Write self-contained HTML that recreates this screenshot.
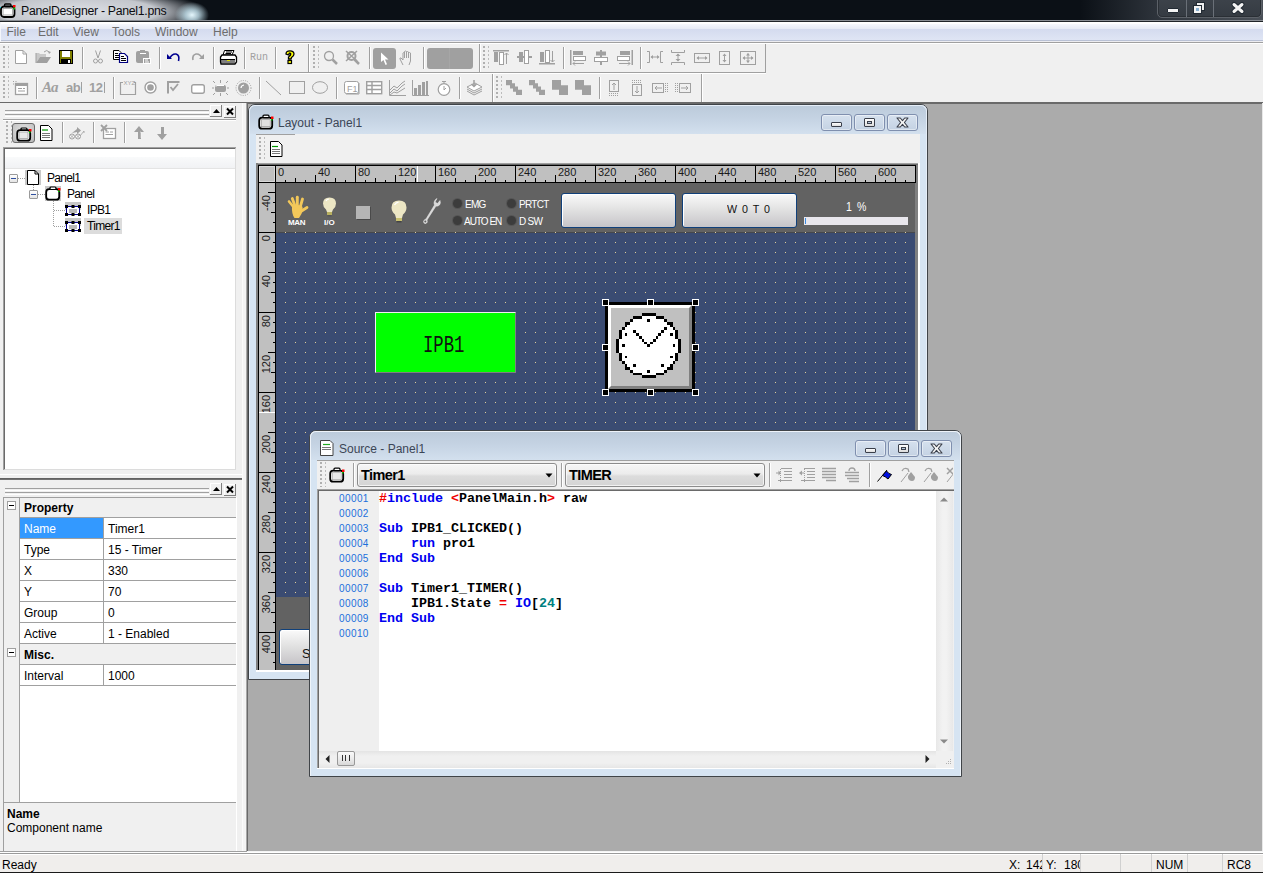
<!DOCTYPE html>
<html><head><meta charset="utf-8">
<style>
*{margin:0;padding:0;box-sizing:border-box}
html,body{width:1263px;height:873px;overflow:hidden;background:#f0f0f0;font-family:"Liberation Sans",sans-serif;font-size:12px;color:#000;position:relative}
.a{position:absolute}
svg{position:absolute;overflow:visible}
#title{left:0;top:0;width:1263px;height:22px;background:#0b1016;overflow:hidden}
.mi{position:absolute;font-size:12px;color:#6d6d6d;margin-top:1px}
.sep{position:absolute;width:1px;background:#a0a0a0;border-right:1px solid #fff;width:2px}
.grip{position:absolute;width:7px;background:linear-gradient(transparent 2px,#f0f0f0 2px) 0 0/7px 4px,linear-gradient(90deg,#b0b0b0 0 2px,transparent 2px 5px,#bcbcbc 5px 6px,transparent 6px) 0 0/7px 4px}
.tbar{position:absolute;border-bottom:1px solid #a0a0a0;border-right:1px solid #a0a0a0;box-shadow:inset 1px 1px 0 #fff}
.pg{font-size:12px;white-space:nowrap}
.rl{font-size:11px;line-height:12px;color:#1a1a1a;white-space:nowrap}
.rv{transform-origin:0 0;transform:rotate(-90deg) translateX(-100%)}
.ln{font-size:10px;line-height:15px;color:#1a70dc;white-space:nowrap;letter-spacing:.4px}
.code{font-family:"Liberation Mono",monospace;font-weight:bold;font-size:13.33px;line-height:15px;color:#000;white-space:pre}
.k{color:#0000f0}.r{color:#f00000}.t{color:#008080}
</style></head><body>

<!-- ============ TITLE BAR ============ -->
<div id="title" class="a">
  <div class="a" style="left:-40px;top:-10px;width:260px;height:40px;background:radial-gradient(ellipse 128px 24px at 118px 22px,rgba(222,225,230,1) 0,rgba(205,208,214,.95) 62%,rgba(11,16,22,0) 100%)"></div>
  <div class="a" style="left:162px;top:-6px;width:60px;height:34px;background:radial-gradient(ellipse 17px 13px at 30px 21px,rgba(228,246,252,1) 0,rgba(190,220,232,.8) 40%,rgba(11,16,22,0) 100%)"></div>
  <div class="a" style="left:1080px;top:0;width:183px;height:20px;background:linear-gradient(90deg,rgba(60,66,74,0),rgba(52,58,66,.9) 45%,#3c424a 70%,#4a5058)"></div>
  <div class="a" style="left:0;top:20px;width:1263px;height:1px;background:#8a8e94"></div>
  <div class="a" style="left:0;top:21px;width:1263px;height:1px;background:#202428"></div>
</div>

<!-- title text/icon -->
<svg style="left:0;top:3px" width="17" height="15" viewBox="0 0 17 15"><rect x="1" y="3.5" width="13.5" height="10.5" rx="3" fill="#fff" stroke="#000" stroke-width="1.8"/><rect x="4.5" y="1" width="6.5" height="2.5" rx="1" fill="none" stroke="#000" stroke-width="1.3"/><rect x="3" y="5.5" width="9.5" height="6.5" fill="#fff" stroke="#999" stroke-width=".8"/><rect x="13" y="2" width="2.5" height="2.5" fill="#f00"/><rect x="13.5" y="4.5" width="1.5" height="2" fill="#0c0"/><rect x="0" y="4" width="1" height="1" fill="#0cc"/></svg>
<div class="a" style="left:21px;top:4px;font-size:12.3px;letter-spacing:-0.3px;color:#0c0c10;white-space:nowrap">PanelDesigner - Panel1.pns</div>
<!-- caption buttons -->
<div class="a" style="left:1157px;top:-3px;width:105px;height:21px;border:1px solid #5c6168;border-radius:0 0 5px 5px;background:linear-gradient(#3d434b,#353b42);box-shadow:inset 0 0 0 1px #2a2f35"></div>
<div class="a" style="left:1186px;top:0;width:1px;height:17px;background:#6a7078"></div>
<div class="a" style="left:1213px;top:0;width:1px;height:17px;background:#6a7078"></div>
<div class="a" style="left:1167px;top:8px;width:12px;height:5px;background:#f4f4f4;border:1px solid #222a33;border-radius:1px"></div>
<svg style="left:1192px;top:1px" width="14" height="14" viewBox="0 0 14 14">
 <rect x="4.5" y="1.5" width="8" height="8" fill="#eee" stroke="#222a33"/>
 <rect x="1.5" y="4.5" width="8" height="8" fill="#f4f4f4" stroke="#222a33"/>
 <rect x="4" y="7" width="3" height="3" fill="#8ab0d0"/>
</svg>
<svg style="left:1231px;top:2px" width="14" height="12" viewBox="0 0 14 12">
 <path d="M3 2.5 L11 9.5 M11 2.5 L3 9.5" stroke="#222a33" stroke-width="5" stroke-linecap="round"/>
 <path d="M3 2.5 L11 9.5 M11 2.5 L3 9.5" stroke="#f4f4f4" stroke-width="3" stroke-linecap="round"/>
</svg>

<!-- ============ MENU BAR ============ -->
<div class="a" style="left:0;top:22px;width:1263px;height:20px;background:linear-gradient(#fff 0,#fff 1.5px,#f4f6fc 2.5px,#e6eaf5 7px,#d4dbef 7px,#dfe5f4 18px,#b9c1d5 18px,#b9c1d5 19px,#ededf1 19px)"></div>
<div class="a" style="left:0;top:22px;width:1px;height:20px;background:#f4f6fb"></div>
<span class="mi" style="left:6.5px;top:24px">File</span>
<span class="mi" style="left:38px;top:24px">Edit</span>
<span class="mi" style="left:73px;top:24px">View</span>
<span class="mi" style="left:112px;top:24px">Tools</span>
<span class="mi" style="left:155px;top:24px">Window</span>
<span class="mi" style="left:213px;top:24px">Help</span>

<div class="a" style="left:0;top:42px;width:1263px;height:1px;background:#a0a0a0"></div>
<div class="a" style="left:0;top:43px;width:1263px;height:1px;background:#fff"></div>

<!-- ============ TOOLBARS ============ -->
<div class="a" style="left:0;top:72px;width:766px;height:1px;background:#a0a0a0"></div>
<div class="a" style="left:0;top:73px;width:766px;height:1px;background:#fff"></div>
<div class="a" style="left:0;top:102px;width:1263px;height:1px;background:#6a6a6a"></div>
<!-- toolbar right borders -->
<div class="a" style="left:308px;top:44px;width:1px;height:28px;background:#a0a0a0"></div>
<div class="a" style="left:309px;top:44px;width:1px;height:28px;background:#fff"></div>
<div class="a" style="left:479px;top:44px;width:1px;height:28px;background:#a0a0a0"></div>
<div class="a" style="left:480px;top:44px;width:1px;height:28px;background:#fff"></div>
<div class="a" style="left:765px;top:44px;width:1px;height:29px;background:#a0a0a0"></div>
<div class="a" style="left:492px;top:74px;width:1px;height:28px;background:#a0a0a0"></div>
<div class="a" style="left:493px;top:74px;width:1px;height:28px;background:#fff"></div>
<div class="a" style="left:701px;top:74px;width:1px;height:28px;background:#a0a0a0"></div>
<div class="a" style="left:702px;top:74px;width:1px;height:28px;background:#fff"></div>

<!-- toolbar 1 icons -->
<div class="grip" style="left:3px;top:46px;height:24px"></div>
<svg style="left:15px;top:50px" width="12" height="14" viewBox="0 0 12 14"><path d="M0.5 0.5H8L11.5 4V13.5H0.5Z" fill="#fff" stroke="#a0a0a0"/><path d="M8 0.5V4H11.5" fill="none" stroke="#a0a0a0"/></svg>
<svg style="left:36px;top:50px" width="16" height="14" viewBox="0 0 16 14"><path d="M0 3H3L4 4H10V7H4L0 13Z" fill="#c8c8c8"/><path d="M0 13L4 7H15L11 13Z" fill="#a0a0a0"/><path d="M0 3V13" stroke="#a0a0a0"/><path d="M8 2Q11 -1 13 2" fill="none" stroke="#a0a0a0"/><path d="M12 1L15 2L13 4Z" fill="#a0a0a0"/></svg>
<svg style="left:59px;top:50px" width="15" height="15" viewBox="0 0 15 15"><rect x="0" y="0" width="14" height="14" fill="#000"/><rect x="1" y="1" width="12" height="12" fill="#808000"/><rect x="3" y="1" width="8" height="6" fill="#fff"/><rect x="2" y="9" width="10" height="5" fill="#000"/><rect x="9" y="10" width="2" height="3" fill="#fff"/></svg>
<div class="sep" style="left:82px;top:47px;height:22px"></div>
<svg style="left:93px;top:50px" width="10" height="14" viewBox="0 0 10 14"><path d="M2.5 0.5L5 8M7.5 0.5L5 8" stroke="#a0a0a0" fill="none"/><circle cx="2.5" cy="11" r="2" fill="none" stroke="#a0a0a0"/><circle cx="7.5" cy="11" r="2" fill="none" stroke="#a0a0a0"/></svg>
<svg style="left:113px;top:50px" width="16" height="14" viewBox="0 0 16 14"><path d="M0.5 0.5H6L8 2.5V9.5H0.5Z" fill="#fff" stroke="#000"/><path d="M2 3.5H5M2 5.5H6M2 7.5H6" stroke="#000"/><path d="M6.5 3.5H11.5L14.5 6.5V12.5H6.5Z" fill="#fff" stroke="#000080" stroke-width="1.2"/><path d="M8 6.5H11M8 8.5H13M8 10.5H13" stroke="#000"/></svg>
<svg style="left:136px;top:50px" width="16" height="14" viewBox="0 0 16 14"><rect x="0" y="1" width="13" height="12" rx="2" fill="#a0a0a0"/><rect x="4" y="0" width="5" height="2" fill="#a0a0a0"/><rect x="4" y="3" width="6" height="1" fill="#fff"/><rect x="7" y="8" width="8" height="6" fill="#fff"/><rect x="8" y="9" width="6" height="4" fill="#a0a0a0"/><path d="M9 10H12M9 12H13" stroke="#fff"/></svg>
<div class="sep" style="left:159px;top:47px;height:22px"></div>
<svg style="left:167px;top:53px" width="14" height="9" viewBox="0 0 14 9"><path d="M3 5Q5 0.5 9 1Q13 2 11.5 8" fill="none" stroke="#000090" stroke-width="1.6"/><path d="M0 1V6H5Z" fill="#000090"/></svg>
<svg style="left:191px;top:53px" width="14" height="9" viewBox="0 0 14 9"><path d="M11 5Q9 0.5 5 1Q1 2 2 7" fill="none" stroke="#a0a0a0" stroke-width="1.6"/><path d="M13 1V6H8Z" fill="#a0a0a0"/></svg>
<div class="sep" style="left:213px;top:47px;height:22px"></div>
<svg style="left:220px;top:50px" width="17" height="15" viewBox="0 0 17 15"><path d="M4.5 0.5H14L12 5H3Z" fill="#fff" stroke="#000"/><path d="M6 2H12M5.5 3.5H11" stroke="#000"/><path d="M2 5H15L16.5 7V12L15 14H1L0.5 12V7Z" fill="#fff" stroke="#000" stroke-width="1.3"/><rect x="1" y="9" width="14" height="1.5" fill="#000"/><rect x="7" y="10" width="3" height="1" fill="#e0e000"/><path d="M1 12H15" stroke="#000"/></svg>
<div class="sep" style="left:244px;top:47px;height:22px"></div>
<div class="a" style="left:250px;top:52px;font-size:10px;color:#a0a0a0;font-family:'Liberation Mono',monospace;letter-spacing:0px">Run</div>
<div class="sep" style="left:275px;top:47px;height:22px"></div>
<svg style="left:284px;top:50px" width="12" height="14" viewBox="0 0 12 14"><path d="M2 4Q2 0.8 6 0.8Q10 0.8 10 4Q10 6 7.5 7.5L7 9H4.5L4.5 7Q7 5.5 6.8 4Q6.5 3 5.5 3.2Q4.8 3.5 5 5Z" fill="#ffff00" stroke="#000" stroke-width="1.3"/><rect x="4" y="10.5" width="3.5" height="3" fill="#ffff00" stroke="#000" stroke-width="1.2"/></svg>

<!-- toolbar 2 (zoom) -->
<div class="grip" style="left:313px;top:46px;height:24px"></div>
<svg style="left:323px;top:50px" width="16" height="16" viewBox="0 0 16 16"><circle cx="6" cy="6" r="4.5" fill="#f0f0f0" stroke="#a0a0a0" stroke-width="1.3"/><path d="M9.5 9.5L14 14" stroke="#a0a0a0" stroke-width="2.5"/></svg>
<svg style="left:345px;top:50px" width="17" height="16" viewBox="0 0 17 16"><circle cx="6.5" cy="6" r="4" fill="#f0f0f0" stroke="#a0a0a0" stroke-width="2"/><path d="M9.5 9.5L14 14" stroke="#a0a0a0" stroke-width="2.5"/><path d="M1 1L12 11M12 1L1 11" stroke="#a0a0a0" stroke-width="1.5"/></svg>
<div class="sep" style="left:369px;top:47px;height:22px"></div>
<div class="a" style="left:373px;top:48px;width:23px;height:21px;background:#a0a0a0;border-radius:3px"></div>
<svg style="left:380px;top:52px" width="10" height="14" viewBox="0 0 10 14"><path d="M1 0.5V10L3.5 8L5.5 13L7 12.3L5 7.5H8.5Z" fill="#fff"/></svg>
<svg style="left:399px;top:50px" width="16" height="16" viewBox="0 0 16 16"><path d="M4 15L1 9Q0.5 7.5 2 8L4 10V3Q4.5 2 5.5 3V8M5.5 3V1.5Q6.5 0.5 7.5 1.5V8M7.5 2Q8.5 1 9.5 2V8M9.5 3Q10.5 2 11.5 3V11L10 15" fill="none" stroke="#a0a0a0"/></svg>
<div class="sep" style="left:423px;top:47px;height:22px"></div>
<div class="a" style="left:427px;top:48px;width:46px;height:21px;background:#a0a0a0;border-radius:3px"></div>
<div class="a" style="left:449px;top:48px;width:1px;height:21px;background:#a6a6a6"></div>

<!-- toolbar 3 (align) -->
<div class="grip" style="left:483px;top:46px;height:24px"></div>
<svg style="left:493px;top:50px" width="16" height="15" viewBox="0 0 16 15"><rect x="0" y="0" width="16" height="1.5" fill="#a0a0a0"/><rect x="1" y="2" width="4" height="10" fill="#a0a0a0"/><rect x="6.5" y="2.5" width="4" height="12" fill="#fff" stroke="#a0a0a0"/><path d="M13.5 14V3M11.5 5L13.5 3L15.5 5" fill="none" stroke="#a0a0a0"/></svg>
<svg style="left:517px;top:50px" width="15" height="15" viewBox="0 0 15 15"><rect x="0" y="6" width="15" height="2" fill="#a0a0a0"/><rect x="2" y="2" width="4" height="10" fill="#a0a0a0"/><rect x="7.5" y="0.5" width="4" height="13" fill="#fff" stroke="#a0a0a0"/></svg>
<svg style="left:539px;top:50px" width="17" height="15" viewBox="0 0 17 15"><rect x="0" y="13" width="16" height="1.5" fill="#a0a0a0"/><rect x="1" y="2" width="4" height="10" fill="#a0a0a0"/><rect x="6.5" y="0.5" width="4" height="12" fill="#fff" stroke="#a0a0a0"/><path d="M13.5 1V12M11.5 10L13.5 12L15.5 10" fill="none" stroke="#a0a0a0"/></svg>
<div class="sep" style="left:563px;top:47px;height:22px"></div>
<svg style="left:570px;top:50px" width="16" height="15" viewBox="0 0 16 15"><rect x="0" y="0" width="1.5" height="15" fill="#a0a0a0"/><rect x="3" y="1" width="10" height="4" fill="#a0a0a0"/><rect x="3.5" y="6.5" width="12" height="4" fill="#fff" stroke="#a0a0a0"/><path d="M3 13.5H14M5 11.5L3 13.5L5 15.5" fill="none" stroke="#a0a0a0"/></svg>
<svg style="left:594px;top:50px" width="14" height="15" viewBox="0 0 14 15"><rect x="6" y="0" width="2" height="15" fill="#a0a0a0"/><rect x="2" y="1.5" width="10" height="4" fill="#a0a0a0"/><rect x="0.5" y="7.5" width="13" height="4" fill="#fff" stroke="#a0a0a0"/></svg>
<svg style="left:617px;top:50px" width="16" height="15" viewBox="0 0 16 15"><rect x="14.5" y="0" width="1.5" height="15" fill="#a0a0a0"/><rect x="3" y="1" width="10" height="4" fill="#a0a0a0"/><rect x="0.5" y="6.5" width="12" height="4" fill="#fff" stroke="#a0a0a0"/><path d="M2 13.5H13M11 11.5L13 13.5L11 15.5" fill="none" stroke="#a0a0a0"/></svg>
<div class="sep" style="left:640px;top:47px;height:22px"></div>
<svg style="left:647px;top:51px" width="16" height="12" viewBox="0 0 16 12"><path d="M0 0.5H2.5V11.5H0M16 0.5H13.5V11.5H16M4 6H12" fill="none" stroke="#a0a0a0"/><path d="M3.5 6L6 4V8ZM12.5 6L10 4V8Z" fill="#a0a0a0"/></svg>
<svg style="left:671px;top:50px" width="14" height="15" viewBox="0 0 14 15"><path d="M0.5 0V2.5H13.5V0M0.5 15V12.5H13.5V15M7 4V11" fill="none" stroke="#a0a0a0"/><path d="M7 3.5L4.5 6H9.5ZM7 11.5L4.5 9H9.5Z" fill="#a0a0a0"/></svg>
<svg style="left:694px;top:53px" width="16" height="10" viewBox="0 0 16 10"><rect x="0.5" y="0.5" width="15" height="9" fill="none" stroke="#a0a0a0"/><path d="M3 5H13" stroke="#a0a0a0"/><path d="M2.5 5L5 3V7ZM13.5 5L11 3V7Z" fill="#a0a0a0"/></svg>
<svg style="left:719px;top:51px" width="11" height="14" viewBox="0 0 11 14"><rect x="0.5" y="0.5" width="10" height="13" fill="none" stroke="#a0a0a0"/><path d="M5.5 3V11" stroke="#a0a0a0"/><path d="M5.5 2.5L3.5 5H7.5ZM5.5 11.5L3.5 9H7.5Z" fill="#a0a0a0"/></svg>
<svg style="left:740px;top:51px" width="16" height="14" viewBox="0 0 16 14"><rect x="0.5" y="0.5" width="15" height="13" fill="none" stroke="#a0a0a0"/><path d="M3 7H13M8 2.5V11.5" stroke="#a0a0a0"/><path d="M2.5 7L5 5V9ZM13.5 7L11 5V9ZM8 2L6 4.5H10ZM8 12L6 9.5H10Z" fill="#a0a0a0"/></svg>

<!-- row 2 toolbar 1 -->
<div class="grip" style="left:3px;top:76px;height:24px"></div>
<svg style="left:12px;top:80px" width="17" height="16" viewBox="0 0 17 16"><path d="M1 1L2 2M3 3L4 4M1 4H2M4 1V2" stroke="#a0a0a0"/><rect x="3.5" y="3.5" width="12" height="11" fill="#fff" stroke="#a0a0a0" stroke-width="1.3"/><rect x="4" y="4" width="11" height="2" fill="#a0a0a0"/><path d="M6 8.5H10M11 8.5H13M6 11H13" stroke="#a0a0a0" stroke-width="1.2"/></svg>
<div class="sep" style="left:36px;top:77px;height:22px"></div>
<div class="a" style="left:42px;top:79px;font-family:'Liberation Serif',serif;font-style:italic;font-weight:bold;font-size:15px;color:#a0a0a0;letter-spacing:-1px">Aa</div>
<div class="a" style="left:66px;top:80px;font-weight:bold;font-size:13px;color:#a0a0a0;letter-spacing:-0.5px">ab</div>
<div class="a" style="left:81px;top:82px;width:1px;height:11px;background:#a0a0a0"></div>
<div class="a" style="left:89px;top:80px;font-weight:bold;font-size:13px;color:#a0a0a0;letter-spacing:-0.5px">12</div>
<div class="a" style="left:104px;top:82px;width:1px;height:11px;background:#a0a0a0"></div>
<div class="sep" style="left:113px;top:77px;height:22px"></div>
<svg style="left:120px;top:80px" width="17" height="16" viewBox="0 0 17 16"><path d="M3 2.5H0.5V14.5H15.5V2.5H14" fill="none" stroke="#a0a0a0" stroke-width="1.2"/><text x="3.5" y="5" font-size="6" fill="#a0a0a0" font-family="Liberation Sans">XYZ</text></svg>
<svg style="left:144px;top:81px" width="13" height="13" viewBox="0 0 13 13"><circle cx="6.5" cy="6.5" r="5.5" fill="#fff" stroke="#a0a0a0" stroke-width="1.4"/><circle cx="6.5" cy="6.5" r="3.3" fill="#a0a0a0"/></svg>
<svg style="left:167px;top:81px" width="13" height="13" viewBox="0 0 13 13"><path d="M1 12.5V1H12.5" fill="none" stroke="#a0a0a0" stroke-width="2"/><path d="M3.5 6L6 9L11 3" fill="none" stroke="#a0a0a0" stroke-width="1.8"/></svg>
<svg style="left:191px;top:84px" width="14" height="10" viewBox="0 0 14 10"><rect x="0.7" y="0.7" width="12.6" height="8.6" rx="2" fill="#fff" stroke="#a0a0a0" stroke-width="1.4"/></svg>
<svg style="left:212px;top:80px" width="17" height="16" viewBox="0 0 17 16"><rect x="3" y="5" width="11" height="7" rx="2" fill="#a0a0a0"/><path d="M4 6.5Q4 5.5 5 5.5H12" stroke="#fff" fill="none"/><path d="M8.5 0V3M8.5 13V16M0 8H2M15 8H17M1 1L3 3M16 1L14 3M1 15L3 13M16 15L14 13" stroke="#a0a0a0"/></svg>
<svg style="left:235px;top:80px" width="17" height="16" viewBox="0 0 17 16"><circle cx="8.5" cy="8" r="5.5" fill="#a0a0a0"/><path d="M6 8Q6 5.5 9 5" stroke="#fff" fill="none" stroke-width="1.2"/><circle cx="8.5" cy="8" r="7.5" fill="none" stroke="#a0a0a0" stroke-dasharray="1 1.3"/></svg>
<div class="sep" style="left:259px;top:77px;height:22px"></div>
<svg style="left:265px;top:80px" width="17" height="16" viewBox="0 0 17 16"><path d="M1 1L16 15" stroke="#a0a0a0"/></svg>
<svg style="left:289px;top:81px" width="17" height="14" viewBox="0 0 17 14"><rect x="0.5" y="0.5" width="15" height="12" fill="none" stroke="#a0a0a0"/></svg>
<svg style="left:312px;top:81px" width="17" height="14" viewBox="0 0 17 14"><ellipse cx="8" cy="6.5" rx="7.5" ry="5.8" fill="none" stroke="#a0a0a0"/></svg>
<div class="sep" style="left:336px;top:77px;height:22px"></div>
<svg style="left:344px;top:81px" width="16" height="14" viewBox="0 0 16 14"><rect x="0.5" y="0.5" width="14" height="12" rx="2" fill="#fff" stroke="#a0a0a0"/><path d="M2 13H15V2" stroke="#a0a0a0" fill="none"/><text x="3" y="10.5" font-size="9" fill="#a0a0a0" font-family="Liberation Sans">F1</text></svg>
<svg style="left:366px;top:81px" width="17" height="14" viewBox="0 0 17 14"><rect x="0.7" y="0.7" width="15" height="12" fill="#fff" stroke="#a0a0a0" stroke-width="1.4"/><path d="M1 4.5H16M1 8.5H16M6 1V13" stroke="#a0a0a0" stroke-width="1.4"/></svg>
<svg style="left:389px;top:80px" width="17" height="16" viewBox="0 0 17 16"><path d="M0.5 0V15.5H17" fill="none" stroke="#a0a0a0"/><path d="M1 10L5 6L8 8L13 3L16 1M1 13L5 9L8 11L13 6L16 4M1 15L5 12L8 13L16 8" fill="none" stroke="#a0a0a0"/></svg>
<svg style="left:412px;top:80px" width="17" height="16" viewBox="0 0 17 16"><path d="M0.5 0V15.5H17" fill="none" stroke="#a0a0a0"/><rect x="2" y="8" width="3" height="7" fill="#a0a0a0"/><rect x="6" y="5" width="3" height="10" fill="#a0a0a0"/><rect x="10" y="2" width="3" height="13" fill="#a0a0a0"/><rect x="14" y="1" width="2" height="14" fill="#a0a0a0"/></svg>
<svg style="left:436px;top:80px" width="16" height="16" viewBox="0 0 16 16"><circle cx="8" cy="9.5" r="5.8" fill="#fff" stroke="#a0a0a0" stroke-width="1.2"/><path d="M6 1.5H10M8 2V3.5M8 6V10L10 8" fill="none" stroke="#a0a0a0"/></svg>
<div class="sep" style="left:459px;top:77px;height:22px"></div>
<svg style="left:466px;top:80px" width="17" height="16" viewBox="0 0 17 16"><path d="M1 9L8 13L16 9M1 11L8 15L16 11" fill="none" stroke="#a0a0a0"/><path d="M1 7L8 11L16 7L9 3Z" fill="#fff" stroke="#a0a0a0"/><path d="M8 0V6M5.5 4L8 6.5L10.5 4" fill="none" stroke="#a0a0a0" stroke-width="1.5"/></svg>

<!-- row 2 toolbar 2 -->
<div class="grip" style="left:496px;top:76px;height:24px"></div>
<svg style="left:506px;top:80px" width="17" height="15" viewBox="0 0 17 14" preserveAspectRatio="none"><path d="M0 0H6V3H9V6H12V9H16V14H10V11H7V8H4V5H0Z" fill="#a0a0a0"/></svg>
<svg style="left:529px;top:80px" width="17" height="15" viewBox="0 0 17 14" preserveAspectRatio="none"><path d="M0 0H6V3H9V6H12V9H16V14H10V11H7V8H4V5H0Z" fill="#a0a0a0"/></svg>
<svg style="left:552px;top:80px" width="17" height="15" viewBox="0 0 17 14" preserveAspectRatio="none"><path d="M0 0H9V5H16V14H7V9H0Z" fill="#a0a0a0"/></svg>
<svg style="left:575px;top:80px" width="17" height="15" viewBox="0 0 17 14" preserveAspectRatio="none"><path d="M0 0H9V5H16V14H7V9H0Z" fill="#a0a0a0"/></svg>
<div class="sep" style="left:599px;top:77px;height:22px"></div>
<svg style="left:609px;top:80px" width="10" height="16" viewBox="0 0 10 16"><rect x="0.5" y="0.5" width="9" height="11" fill="none" stroke="#a0a0a0"/><path d="M5 3V10M3 5L5 3L7 5" fill="none" stroke="#a0a0a0"/><path d="M0 13.5H10M0 15.5H10" stroke="#a0a0a0" stroke-dasharray="1 1"/></svg>
<svg style="left:632px;top:80px" width="10" height="16" viewBox="0 0 10 16"><path d="M0 0.5H10M0 2.5H10" stroke="#a0a0a0" stroke-dasharray="1 1"/><rect x="0.5" y="4.5" width="9" height="11" fill="none" stroke="#a0a0a0"/><path d="M5 6V13M3 11L5 13L7 11" fill="none" stroke="#a0a0a0"/></svg>
<svg style="left:652px;top:83px" width="16" height="10" viewBox="0 0 16 10"><rect x="0.5" y="0.5" width="11" height="9" fill="none" stroke="#a0a0a0"/><path d="M3 5H10M5 3L3 5L5 7" fill="none" stroke="#a0a0a0"/><path d="M13.5 0V10M15.5 0V10" stroke="#a0a0a0" stroke-dasharray="1 1"/></svg>
<svg style="left:675px;top:83px" width="16" height="10" viewBox="0 0 16 10"><path d="M0.5 0V10M2.5 0V10" stroke="#a0a0a0" stroke-dasharray="1 1"/><rect x="4.5" y="0.5" width="11" height="9" fill="none" stroke="#a0a0a0"/><path d="M6 5H13M11 3L13 5L11 7" fill="none" stroke="#a0a0a0"/></svg>

<!-- ============ LEFT DOCK ============ -->
<div class="a" style="left:236px;top:497px;width:1px;height:354px;background:#fff"></div>
<div class="a" style="left:235px;top:497px;width:1px;height:354px;background:#e2e2e2"></div>
<div class="a" style="left:242px;top:103px;width:1px;height:748px;background:#fbfbfb"></div>
<div class="a" style="left:243px;top:103px;width:3px;height:748px;background:#f4f4f4"></div>
<div class="a" style="left:246px;top:103px;width:1px;height:748px;background:#a8a8a8"></div>
<div class="a" style="left:247px;top:103px;width:1px;height:748px;background:#6a6a6a"></div>
<!-- dock 1 title -->
<div class="a" style="left:5px;top:110px;width:204px;height:3px;border-top:1px solid #a0a0a0;border-bottom:1px solid #fff"></div>
<div class="a" style="left:5px;top:114px;width:204px;height:3px;border-top:1px solid #a0a0a0;border-bottom:1px solid #fff"></div>
<div class="a" style="left:210px;top:105px;width:12px;height:12px;background:#f0f0f0;border-right:1px solid #808080;border-bottom:1px solid #808080;box-shadow:inset 1px 1px 0 #fff"></div>
<svg style="left:213px;top:109px" width="7" height="4" viewBox="0 0 7 4"><path d="M0 4L3.5 0L7 4Z" fill="#000"/></svg>
<div class="a" style="left:224px;top:106px;width:12px;height:12px;background:#f0f0f0;border-right:1px solid #808080;border-bottom:1px solid #808080;box-shadow:inset 1px 1px 0 #fff"></div>
<svg style="left:226px;top:108px" width="8" height="7" viewBox="0 0 8 7"><path d="M1 0.5L7 6.5M7 0.5L1 6.5" stroke="#000" stroke-width="2"/></svg>
<div class="a" style="left:3px;top:119px;width:233px;height:1px;background:#a0a0a0"></div>
<div class="a" style="left:3px;top:120px;width:233px;height:1px;background:#fff"></div>
<!-- dock 1 toolbar -->
<div class="grip" style="left:6px;top:121px;height:24px"></div>
<div class="a" style="left:12px;top:123px;width:23px;height:20px;border:1px solid #6a6a6a;border-radius:3px;background:radial-gradient(ellipse at 50% 40%,#e4e4e4,#c8c8c8 70%,#b4b4b4)"></div>
<svg style="left:16px;top:127px" width="17" height="15" viewBox="0 0 17 15"><rect x="1.2" y="3.2" width="13" height="10.5" rx="3" fill="#fff" stroke="#000" stroke-width="1.8"/><rect x="5" y="1" width="6" height="2.5" rx="1" fill="none" stroke="#000" stroke-width="1.2"/><rect x="3" y="5" width="9" height="6.5" fill="#e8e8e8" stroke="#888" stroke-width=".6"/><rect x="13" y="2" width="2.5" height="2.5" fill="#f00"/><rect x="13" y="4.5" width="1.5" height="1.5" fill="#0c0"/></svg>
<svg style="left:40px;top:125px" width="13" height="16" viewBox="0 0 13 16"><path d="M0.5 0.5H8.5L12 4V15.5H0.5Z" fill="#fff" stroke="#000"/><path d="M2 5H8" stroke="#090" stroke-width="1.2"/><path d="M2 8.5H10M2 10.5H10M2 12.5H10" stroke="#555" stroke-width=".8"/></svg>
<div class="sep" style="left:62px;top:122px;height:21px"></div>
<svg style="left:69px;top:125px" width="17" height="15" viewBox="0 0 17 15"><path d="M3 8L8 4V2L12 5.5L8 9V7Z" fill="#a0a0a0"/><circle cx="3" cy="11.5" r="2.5" fill="#fff" stroke="#a0a0a0"/><circle cx="9" cy="11.5" r="2.5" fill="#fff" stroke="#a0a0a0"/><path d="M1.5 10L4.5 13M4.5 10L1.5 13M7.5 10L10.5 13M10.5 10L7.5 13M11 11L15 6V8" stroke="#a0a0a0" fill="none" stroke-width=".8"/></svg>
<div class="sep" style="left:93px;top:122px;height:21px"></div>
<svg style="left:100px;top:124px" width="17" height="17" viewBox="0 0 17 17"><rect x="3.5" y="4.5" width="12" height="10" fill="#fff" stroke="#a0a0a0" stroke-width="1.3"/><path d="M5.5 8H9M5.5 10.5H13M10 8H13" stroke="#a0a0a0"/><path d="M1 1L7 7M7 1L1 7" stroke="#a0a0a0" stroke-width="1.8"/></svg>
<div class="sep" style="left:124px;top:122px;height:21px"></div>
<svg style="left:132px;top:126px" width="14" height="14" viewBox="0 0 14 14"><path d="M7 0L12 6H9V13H6V6H2Z" fill="#a0a0a0"/><path d="M8 6H9V12" stroke="#fff" fill="none" stroke-width=".5"/></svg>
<svg style="left:155px;top:126px" width="14" height="14" viewBox="0 0 14 14"><path d="M7 14L12 8H9V1H6V8H2Z" fill="#a0a0a0"/></svg>
<!-- tree box -->
<div class="a" style="left:3px;top:147px;width:233px;height:323px;background:#fff;border-top:2px solid #6a6a6a;border-left:2px solid #6a6a6a;border-right:1px solid #dcdcdc;border-bottom:1px solid #dcdcdc"></div><div class="a" style="left:3px;top:147px;width:233px;height:1px;background:#a0a0a0"></div><div class="a" style="left:3px;top:147px;width:1px;height:323px;background:#a0a0a0"></div>
<div class="a" style="left:5px;top:157px;width:230px;height:11px;background:linear-gradient(#f9fafb,#f1f2f4)"></div>
<div class="a" style="left:5px;top:168px;width:230px;height:1px;background:#e4e4e4"></div>

<!-- tree items -->
<svg style="left:0;top:0;width:1263px;height:873px" width="1263" height="873">
 <g stroke="#a0a0a0" stroke-dasharray="1 1" stroke-width="1">
  <path d="M18 178.5H25M33.5 185V190M38 194.5H45M53.5 201V226M54 210.5H65M54 226.5H65"/>
 </g>
</svg>
<div class="a" style="left:9px;top:174px;width:9px;height:9px;border:1px solid #9a9a9a;border-radius:1px;background:linear-gradient(#fff,#e4e4e4)"></div>
<div class="a" style="left:11px;top:178px;width:5px;height:1px;background:#3050a0"></div>
<div class="a" style="left:29px;top:190px;width:9px;height:9px;border:1px solid #9a9a9a;border-radius:1px;background:linear-gradient(#fff,#e4e4e4)"></div>
<div class="a" style="left:31px;top:194px;width:5px;height:1px;background:#3050a0"></div>
<div class="a" style="left:25px;top:170px;width:16px;height:15px;background:#c8c8c8"></div>
<svg style="left:27px;top:170px" width="12" height="15" viewBox="0 0 12 15"><path d="M0.5 0.5H8L11.5 4V14.5H0.5Z" fill="#fff" stroke="#000"/><path d="M8 0.5V4H11.5" fill="none" stroke="#000"/></svg>
<div class="a" style="left:47px;top:171px;font-size:12px;letter-spacing:-0.7px;color:#000">Panel1</div>
<div class="a" style="left:45px;top:186px;width:16px;height:15px;background:#c8c8c8"></div>
<svg style="left:45px;top:186px" width="17" height="15" viewBox="0 0 17 15"><rect x="1.2" y="3.2" width="13" height="10.5" rx="3" fill="#fff" stroke="#000" stroke-width="1.8"/><rect x="5" y="1" width="6" height="2.5" rx="1" fill="#fff" stroke="#000" stroke-width="1.2"/><rect x="13" y="2" width="2.5" height="2.5" fill="#f00"/><rect x="13" y="4.5" width="1.5" height="1.5" fill="#0c0"/></svg>
<div class="a" style="left:67px;top:187px;font-size:12px;letter-spacing:-0.7px;color:#000">Panel</div>
<div class="a" style="left:65px;top:202px;width:16px;height:8px;background:#c8c8c8"></div>
<svg style="left:65px;top:205px" width="16" height="11" viewBox="0 0 16 11"><rect x="1.5" y="1.5" width="13" height="8" fill="#fff" stroke="#000090" stroke-width="1"/><rect x="4" y="4" width="8" height="4" fill="#b8b8b8"/><path d="M0 0H3V3H0ZM6.5 0H9.5V3H6.5ZM13 0H16V3H13ZM0 8H3V11H0ZM6.5 8H9.5V11H6.5ZM13 8H16V11H13Z" fill="#000"/></svg>
<div class="a" style="left:87px;top:203px;font-size:12px;letter-spacing:-0.7px;color:#000">IPB1</div>
<div class="a" style="left:65px;top:218px;width:16px;height:8px;background:#c8c8c8"></div>
<svg style="left:65px;top:221px" width="16" height="11" viewBox="0 0 16 11"><rect x="1.5" y="1.5" width="13" height="8" fill="#fff" stroke="#000090" stroke-width="1"/><rect x="4" y="4" width="8" height="4" fill="#b8b8b8"/><path d="M0 0H3V3H0ZM6.5 0H9.5V3H6.5ZM13 0H16V3H13ZM0 8H3V11H0ZM6.5 8H9.5V11H6.5ZM13 8H16V11H13Z" fill="#000"/></svg>
<div class="a" style="left:84px;top:218px;width:38px;height:16px;background:#dcdcdc"></div>
<div class="a" style="left:87px;top:219px;font-size:12px;letter-spacing:-0.7px;color:#000">Timer1</div>

<!-- dock 2 -->
<div class="a" style="left:0;top:474px;width:242px;height:1px;background:#fff"></div><div class="a" style="left:0;top:478px;width:242px;height:2px;background:linear-gradient(#5a5a5a,#7a7a7a)"></div>
<div class="a" style="left:5px;top:488px;width:204px;height:3px;border-top:1px solid #a0a0a0;border-bottom:1px solid #fff"></div>
<div class="a" style="left:5px;top:492px;width:204px;height:3px;border-top:1px solid #a0a0a0;border-bottom:1px solid #fff"></div>
<div class="a" style="left:210px;top:483px;width:12px;height:12px;background:#f0f0f0;border-right:1px solid #808080;border-bottom:1px solid #808080;box-shadow:inset 1px 1px 0 #fff"></div>
<svg style="left:213px;top:487px" width="7" height="4" viewBox="0 0 7 4"><path d="M0 4L3.5 0L7 4Z" fill="#000"/></svg>
<div class="a" style="left:224px;top:484px;width:12px;height:12px;background:#f0f0f0;border-right:1px solid #808080;border-bottom:1px solid #808080;box-shadow:inset 1px 1px 0 #fff"></div>
<svg style="left:226px;top:486px" width="8" height="7" viewBox="0 0 8 7"><path d="M1 0.5L7 6.5M7 0.5L1 6.5" stroke="#000" stroke-width="2"/></svg>
<!-- property grid -->
<div class="a" style="left:3px;top:497px;width:233px;height:305px;background:#fff;border-top:1px solid #a0a0a0;border-left:1px solid #a0a0a0"></div>
<div class="a" style="left:4px;top:498px;width:15px;height:304px;background:#f0f0f0"></div>
<div class="a" style="left:19px;top:498px;width:1px;height:304px;background:#a0a0a0"></div>
<div class="a" style="left:20px;top:498px;width:216px;height:20px;background:#f0f0f0"></div>
<div class="a" style="left:20px;top:644px;width:216px;height:21px;background:#f0f0f0"></div>
<div class="a" style="left:20px;top:518px;width:83px;height:20px;background:#3399ff"></div>
<div class="a" style="left:103px;top:518px;width:1px;height:126px;background:#a0a0a0"></div>
<div class="a" style="left:103px;top:665px;width:1px;height:20px;background:#a0a0a0"></div>
<div class="a" style="left:20px;top:517px;width:216px;height:1px;background:#a0a0a0"></div>
<div class="a" style="left:20px;top:538px;width:216px;height:1px;background:#a0a0a0"></div>
<div class="a" style="left:20px;top:559px;width:216px;height:1px;background:#a0a0a0"></div>
<div class="a" style="left:20px;top:580px;width:216px;height:1px;background:#a0a0a0"></div>
<div class="a" style="left:20px;top:601px;width:216px;height:1px;background:#a0a0a0"></div>
<div class="a" style="left:20px;top:622px;width:216px;height:1px;background:#a0a0a0"></div>
<div class="a" style="left:20px;top:643px;width:216px;height:1px;background:#a0a0a0"></div>
<div class="a" style="left:20px;top:664px;width:216px;height:1px;background:#a0a0a0"></div>
<div class="a" style="left:20px;top:685px;width:216px;height:1px;background:#a0a0a0"></div>
<div class="a" style="left:7px;top:501px;width:9px;height:9px;border:1px solid #a0a0a0;background:#fff"></div>
<div class="a" style="left:9px;top:505px;width:5px;height:1px;background:#000"></div>
<div class="a" style="left:7px;top:648px;width:9px;height:9px;border:1px solid #a0a0a0;background:#fff"></div>
<div class="a" style="left:9px;top:652px;width:5px;height:1px;background:#000"></div>
<div class="a pg" style="left:24px;top:501px;font-weight:bold">Property</div>
<div class="a pg" style="left:24px;top:522px;color:#fff">Name</div>
<div class="a pg" style="left:108px;top:522px">Timer1</div>
<div class="a pg" style="left:24px;top:543px">Type</div>
<div class="a pg" style="left:108px;top:543px">15 - Timer</div>
<div class="a pg" style="left:24px;top:564px">X</div>
<div class="a pg" style="left:108px;top:564px">330</div>
<div class="a pg" style="left:24px;top:585px">Y</div>
<div class="a pg" style="left:108px;top:585px">70</div>
<div class="a pg" style="left:24px;top:606px">Group</div>
<div class="a pg" style="left:108px;top:606px">0</div>
<div class="a pg" style="left:24px;top:627px">Active</div>
<div class="a pg" style="left:108px;top:627px">1 - Enabled</div>
<div class="a pg" style="left:24px;top:648px;font-weight:bold">Misc.</div>
<div class="a pg" style="left:24px;top:669px">Interval</div>
<div class="a pg" style="left:108px;top:669px">1000</div>
<!-- description -->
<div class="a" style="left:3px;top:802px;width:233px;height:50px;border-top:1px solid #a0a0a0;border-left:1px solid #a0a0a0;background:#f0f0f0"></div>
<div class="a pg" style="left:7px;top:807px;font-weight:bold">Name</div>
<div class="a pg" style="left:7px;top:821px">Component name</div>

<!-- ============ STATUS BAR ============ -->
<div class="a" style="left:0;top:851px;width:247px;height:1px;background:#a0a0a0"></div>
<div class="a" style="left:247px;top:851px;width:1016px;height:1px;background:#f4f4f4"></div>
<div class="a" style="left:0;top:852px;width:1263px;height:1px;background:#fff"></div>
<div class="a" style="left:0;top:853px;width:1263px;height:1px;background:#9a9a9a"></div>
<div class="a" style="left:0;top:854px;width:1263px;height:1px;background:#fff"></div>
<div class="a" style="left:0;top:855px;width:1263px;height:17px;background:#f0eeec"></div>
<div class="a" style="left:0;top:872px;width:1263px;height:1px;background:#1a1a1a"></div>
<div class="a pg" style="left:2px;top:858px">Ready</div>
<div class="a" style="left:1008px;top:853px;width:34px;height:19px;overflow:hidden;font-size:12px;white-space:nowrap"><span class="a" style="left:1px;top:5px">X:</span><span class="a" style="left:18px;top:5px">142</span></div>
<div class="a" style="left:1046px;top:853px;width:34px;height:19px;overflow:hidden;font-size:12px;white-space:nowrap"><span class="a" style="left:0px;top:5px">Y:</span><span class="a" style="left:18px;top:5px">180</span></div>
<div class="a" style="left:1042px;top:854px;width:1px;height:18px;background:#d0d0d0"></div>
<div class="a" style="left:1080px;top:854px;width:1px;height:18px;background:#d0d0d0"></div>
<div class="a" style="left:1120px;top:854px;width:1px;height:18px;background:#d0d0d0"></div>
<div class="a" style="left:1151px;top:854px;width:1px;height:18px;background:#d0d0d0"></div>
<div class="a" style="left:1187px;top:854px;width:1px;height:18px;background:#d0d0d0"></div>
<div class="a" style="left:1222px;top:854px;width:1px;height:18px;background:#d0d0d0"></div>
<div class="a pg" style="left:1156px;top:858px">NUM</div>
<div class="a pg" style="left:1227px;top:858px">RC8</div>

<!-- ============ MDI ============ -->
<div class="a" style="left:248px;top:103px;width:1015px;height:748px;background:#ababab"></div>
<div class="a" style="left:248px;top:103px;width:1015px;height:1px;background:#6a6a6a"></div>
<div class="a" style="left:1262px;top:103px;width:1px;height:748px;background:#e8e8e8"></div>
<!-- ============ LAYOUT WINDOW ============ -->
<div class="a" style="left:248px;top:104px;width:680px;height:576px;border:1px solid #404448;border-radius:7px 7px 0 0;background:#d6e4f2"></div>
<div class="a" style="left:249px;top:105px;width:678px;height:29px;border-radius:6px 6px 0 0;background:linear-gradient(#bccbdb,#c6d4e4 50%,#d3e0ee);border:1px solid #e6eef8;border-bottom:0"></div>
<div class="a" style="left:249px;top:134px;width:1px;height:545px;background:#e6eef8"></div>
<div class="a" style="left:926px;top:134px;width:1px;height:545px;background:#e6eef8"></div>
<svg style="left:258px;top:114px" width="17" height="16" viewBox="0 0 17 16"><rect x="1.2" y="3.7" width="13" height="11" rx="3" fill="#fff" stroke="#000" stroke-width="1.8"/><rect x="5" y="1.2" width="6" height="2.5" rx="1" fill="#fff" stroke="#000" stroke-width="1.2"/><rect x="3.2" y="5.7" width="9" height="7" fill="#e0e0e0" stroke="#888" stroke-width=".6"/><rect x="13" y="2.5" width="2.5" height="2.5" fill="#f00"/><rect x="13" y="5" width="1.5" height="1.5" fill="#0c0"/></svg>
<div class="a" style="left:278px;top:116px;font-size:12px;color:#3c4656;white-space:nowrap">Layout - Panel1</div>
<div class="a" style="left:821px;top:114px;width:31px;height:17px;border:1px solid #7f8fae;border-radius:3px;background:linear-gradient(#d6e1ee,#c4d2e3);box-shadow:inset 0 0 0 1px rgba(255,255,255,.45)"></div>
<div class="a" style="left:854px;top:114px;width:31px;height:17px;border:1px solid #7f8fae;border-radius:3px;background:linear-gradient(#d6e1ee,#c4d2e3);box-shadow:inset 0 0 0 1px rgba(255,255,255,.45)"></div>
<div class="a" style="left:887px;top:114px;width:31px;height:17px;border:1px solid #7f8fae;border-radius:3px;background:linear-gradient(#d6e1ee,#c4d2e3);box-shadow:inset 0 0 0 1px rgba(255,255,255,.45)"></div>
<div class="a" style="left:831px;top:122px;width:11px;height:5px;border:1px solid #3a3f4a;border-radius:1px;background:linear-gradient(#fff,#dcdcdc)"></div>
<div class="a" style="left:864px;top:118px;width:11px;height:9px;border:1px solid #3a3f4a;border-radius:1px;background:linear-gradient(#fff,#dcdcdc)"></div>
<div class="a" style="left:867px;top:121px;width:5px;height:3px;border:1px solid #3a3f4a;background:#b8c8dc"></div>
<svg style="left:896px;top:117px" width="13" height="11" viewBox="0 0 13 11"><path d="M1 1H4.3L6.5 3.6L8.7 1H12L8.4 5.5L12 10H8.7L6.5 7.4L4.3 10H1L4.6 5.5Z" fill="#f6f6f6" stroke="#3a3f4a" stroke-width="1.1" stroke-linejoin="round"/></svg>
<div class="a" style="left:256px;top:134px;width:664px;height:538px;background:#f0f0f0"></div>
<div class="a" style="left:256px;top:134px;width:39px;height:1px;background:#a0a0a0"></div>
<div class="grip" style="left:259px;top:137px;height:24px"></div>
<svg style="left:270px;top:141px" width="13" height="16" viewBox="0 0 13 16"><path d="M0.5 0.5H8.5L12 4V15.5H0.5Z" fill="#fff" stroke="#000"/><path d="M2 5.5H8" stroke="#090" stroke-width="1.2"/><path d="M2 8.5H10M2 10.5H10M2 12.5H10" stroke="#555" stroke-width=".8"/></svg>
<div class="a" style="left:256px;top:163px;width:664px;height:1px;background:#a0a0a0"></div>
<div class="a" style="left:256px;top:164px;width:664px;height:1px;background:#696969"></div>
<div class="a" style="left:256px;top:163px;width:2px;height:509px;background:#808080"></div>
<div class="a" style="left:918px;top:163px;width:2px;height:509px;background:#fff"></div>
<div class="a" style="left:256px;top:670px;width:664px;height:2px;background:#fff"></div>
<div class="a" style="left:258px;top:165px;width:660px;height:505px;background:#808080"></div>
<div class="a" style="left:276px;top:183px;width:639px;height:487px;background:#626262"></div>
<svg style="left:276px;top:232px" width="639" height="365"><defs><pattern id="dots" x="9" y="0" width="10" height="10" patternUnits="userSpaceOnUse"><rect x="0" y="0" width="1" height="1" fill="#e6d19a"/></pattern></defs><rect width="639" height="365" fill="#3a4b72"/><rect y="0" width="639" height="1" fill="#45474c"/><rect width="639" height="365" fill="url(#dots)"/></svg>
<div class="a" style="left:258px;top:165px;width:658px;height:18px;background:#000"></div>
<div class="a" style="left:258px;top:165px;width:18px;height:505px;background:#000"></div>
<div class="a" style="left:259px;top:166px;width:16px;height:16px;background:#c0c0c0;border:1px solid #d8d8d8"></div>
<div class="a" style="left:276px;top:166px;width:639px;height:16px;background:#c0c0c0"></div>
<div class="a" style="left:259px;top:183px;width:16px;height:487px;background:#c0c0c0"></div>
<svg style="left:0;top:0" width="1263" height="873"><path d="M285.5 180V182M295.5 178V182M305.5 180V182M315.5 175V182M325.5 180V182M335.5 178V182M345.5 180V182M355.5 166V182M365.5 180V182M375.5 178V182M385.5 180V182M395.5 175V182M405.5 180V182M415.5 178V182M425.5 180V182M435.5 166V182M445.5 180V182M455.5 178V182M465.5 180V182M475.5 175V182M485.5 180V182M495.5 178V182M505.5 180V182M515.5 166V182M525.5 180V182M535.5 178V182M545.5 180V182M555.5 175V182M565.5 180V182M575.5 178V182M585.5 180V182M595.5 166V182M605.5 180V182M615.5 178V182M625.5 180V182M635.5 175V182M645.5 180V182M655.5 178V182M665.5 180V182M675.5 166V182M685.5 180V182M695.5 178V182M705.5 180V182M715.5 175V182M725.5 180V182M735.5 178V182M745.5 180V182M755.5 166V182M765.5 180V182M775.5 178V182M785.5 180V182M795.5 175V182M805.5 180V182M815.5 178V182M825.5 180V182M835.5 166V182M845.5 180V182M855.5 178V182M865.5 180V182M875.5 175V182M885.5 180V182M895.5 178V182M905.5 180V182M268 192.5H276M273 202.5H276M271 212.5H276M273 222.5H276M259 232.5H276M273 242.5H276M271 252.5H276M273 262.5H276M268 272.5H276M273 282.5H276M271 292.5H276M273 302.5H276M259 312.5H276M273 322.5H276M271 332.5H276M273 342.5H276M268 352.5H276M273 362.5H276M271 372.5H276M273 382.5H276M259 392.5H276M273 402.5H276M271 412.5H276M273 422.5H276M268 432.5H276M273 442.5H276M271 452.5H276M273 462.5H276M259 472.5H276M273 482.5H276M271 492.5H276M273 502.5H276M268 512.5H276M273 522.5H276M271 532.5H276M273 542.5H276M259 552.5H276M273 562.5H276M271 572.5H276M273 582.5H276M268 592.5H276M273 602.5H276M271 612.5H276M273 622.5H276M259 632.5H276M273 642.5H276M271 652.5H276M273 662.5H276" stroke="#000" stroke-width="1"/></svg>
<div class="a rl" style="left:278px;top:166px">0</div>
<div class="a rl" style="left:318px;top:166px">40</div>
<div class="a rl" style="left:358px;top:166px">80</div>
<div class="a rl" style="left:398px;top:166px">120</div>
<div class="a rl" style="left:438px;top:166px">160</div>
<div class="a rl" style="left:478px;top:166px">200</div>
<div class="a rl" style="left:518px;top:166px">240</div>
<div class="a rl" style="left:558px;top:166px">280</div>
<div class="a rl" style="left:598px;top:166px">320</div>
<div class="a rl" style="left:638px;top:166px">360</div>
<div class="a rl" style="left:678px;top:166px">400</div>
<div class="a rl" style="left:718px;top:166px">440</div>
<div class="a rl" style="left:758px;top:166px">480</div>
<div class="a rl" style="left:798px;top:166px">520</div>
<div class="a rl" style="left:838px;top:166px">560</div>
<div class="a rl" style="left:878px;top:166px">600</div>
<div class="a rl rv" style="left:260px;top:195px">-40</div>
<div class="a rl rv" style="left:260px;top:235px">0</div>
<div class="a rl rv" style="left:260px;top:275px">40</div>
<div class="a rl rv" style="left:260px;top:315px">80</div>
<div class="a rl rv" style="left:260px;top:355px">120</div>
<div class="a rl rv" style="left:260px;top:395px">160</div>
<div class="a rl rv" style="left:260px;top:435px">200</div>
<div class="a rl rv" style="left:260px;top:475px">240</div>
<div class="a rl rv" style="left:260px;top:515px">280</div>
<div class="a rl rv" style="left:260px;top:555px">320</div>
<div class="a rl rv" style="left:260px;top:595px">360</div>
<div class="a rl rv" style="left:260px;top:635px">400</div>
<div class="a" style="left:417px;top:166px;width:1px;height:16px;background:#fff"></div>
<div class="a" style="left:259px;top:412px;width:16px;height:1px;background:#fff"></div>
<!-- panel widgets -->
<svg style="left:284px;top:194px" width="26" height="26" viewBox="0 0 26 26"><g stroke="#f3c85a" stroke-linecap="round" fill="none"><path d="M5 7.5L9.5 13" stroke-width="2.6"/><path d="M8.3 4.5L11 12" stroke-width="2.8"/><path d="M13.3 3.2L13.3 12" stroke-width="2.9"/><path d="M18.5 5L16.5 12" stroke-width="2.8"/><path d="M23 13.5L17.5 17" stroke-width="2.8"/></g><path d="M8 12Q8.5 11 13 11Q18 11 18.5 13Q19 18 16.5 21.5L15 24H10.5Q7.5 20 8 12Z" fill="#f3c85a"/></svg>
<div class="a" style="left:288px;top:218px;font-size:8px;font-weight:bold;color:#fff;letter-spacing:-.3px">MAN</div>
<svg style="left:322px;top:197px" width="15" height="20" viewBox="0 0 15 20"><path d="M7.5 0.5Q14 0.5 14 6.5Q14 10 11 12.5L10 15H5L4 12.5Q1 10 1 6.5Q1 0.5 7.5 0.5Z" fill="#ece6c4"/><path d="M4 4Q5 2 7 2" stroke="#fff" fill="none" stroke-width="1.2"/><rect x="5" y="15" width="5" height="3" fill="#b8b060"/><rect x="5.5" y="18" width="4" height="1.5" fill="#555"/></svg>
<div class="a" style="left:324px;top:218px;font-size:8px;font-weight:bold;color:#fff">I/O</div>
<div class="a" style="left:356px;top:206px;width:14px;height:13px;background:#b5b5b5;box-shadow:1px 1px 0 #4a4a4a"></div>
<svg style="left:391px;top:200px" width="16" height="23" viewBox="0 0 16 23"><path d="M8 0.5Q15.5 0.5 15.5 7.5Q15.5 11.5 12 14.5L11 18H5L4 14.5Q0.5 11.5 0.5 7.5Q0.5 0.5 8 0.5Z" fill="#ece6c4"/><path d="M3.5 5Q5 2.5 7.5 2.2" stroke="#fff" fill="none" stroke-width="1.3"/><rect x="5" y="18" width="6" height="3" fill="#c8c070"/><rect x="5.5" y="21" width="5" height="1.5" fill="#444"/></svg>
<svg style="left:422px;top:197px" width="20" height="28" viewBox="0 0 20 28"><path d="M15 1.5L13 5L15.5 6.5L18 3.5Q19 6 17.5 8Q16 9.5 14 9L5 23Q6 25.5 4 26.5Q1.5 27 1.5 24.5Q1.8 22.5 4 22L12.5 8Q11.5 6 12.5 4Q13.5 2 15 1.5Z" fill="#d8d8d8" stroke="#f0f0f0" stroke-width=".5"/><circle cx="3.3" cy="24.5" r="1" fill="#626262"/></svg>
<div class="a" style="left:453.0px;top:199.0px;width:9px;height:9px;border-radius:50%;background:#3c3c3c;box-shadow:0 0 0 1px #555"></div>
<div class="a" style="left:453.0px;top:216.0px;width:9px;height:9px;border-radius:50%;background:#3c3c3c;box-shadow:0 0 0 1px #555"></div>
<div class="a" style="left:507.0px;top:199.0px;width:9px;height:9px;border-radius:50%;background:#3c3c3c;box-shadow:0 0 0 1px #555"></div>
<div class="a" style="left:507.0px;top:216.0px;width:9px;height:9px;border-radius:50%;background:#3c3c3c;box-shadow:0 0 0 1px #555"></div>
<div class="a" style="left:465px;top:199px;font-size:10px;color:#fff;white-space:nowrap;letter-spacing:-.7px">EMG</div>
<div class="a" style="left:464px;top:216px;font-size:10px;color:#fff;white-space:nowrap;letter-spacing:-1px">AUTO EN</div>
<div class="a" style="left:519px;top:199px;font-size:10px;color:#fff;white-space:nowrap;letter-spacing:-.7px">PRTCT</div>
<div class="a" style="left:519px;top:216px;font-size:10px;color:#fff;white-space:nowrap;letter-spacing:-.7px">D SW</div>
<div class="a" style="left:561px;top:193px;width:115px;height:35px;border:1px solid #10407a;border-radius:3px;background:linear-gradient(#fafafa,#e0e0e0 50%,#c6c4c8);box-shadow:inset 1px 1px 0 #fff"></div>
<div class="a" style="left:682px;top:193px;width:115px;height:35px;border:1px solid #10407a;border-radius:3px;background:linear-gradient(#fafafa,#e0e0e0 50%,#c6c4c8);box-shadow:inset 1px 1px 0 #fff"></div>
<div class="a" style="left:727px;top:203px;font-size:11.5px;color:#111;letter-spacing:5.2px;white-space:nowrap;transform:scaleX(.93);transform-origin:0 0">W0T0</div>
<div class="a" style="left:846px;top:199px;font-size:13.5px;color:#fff;white-space:nowrap;letter-spacing:1.5px;transform:scaleX(.78);transform-origin:0 0">1 %</div>
<div class="a" style="left:804px;top:217px;width:104px;height:8px;background:#e8e6ec"></div>
<div class="a" style="left:805px;top:218px;width:1px;height:6px;background:#3a8ae0"></div>
<div class="a" style="left:279px;top:629px;width:40px;height:36px;border:1px solid #10407a;border-radius:3px;background:linear-gradient(#fafafa,#e0e0e0 50%,#c6c4c8);box-shadow:inset 1px 1px 0 #fff"></div>
<div class="a" style="left:302px;top:647px;font-size:12.5px;color:#111">S</div>
<div class="a" style="left:375px;top:312px;width:141px;height:61px;background:#00ff00;border:1px solid;border-color:#f0f0f0 #808080 #808080 #f0f0f0"></div>
<div class="a" style="left:423px;top:332px;font-family:'Liberation Mono',monospace;font-size:24px;color:#101010;transform:scaleX(.72);transform-origin:0 0;white-space:nowrap">IPB1</div>
<div class="a" style="left:605px;top:302px;width:90px;height:90px;border:3px solid #000;background:#c0c0c0"></div>
<div class="a" style="left:608px;top:305px;width:84px;height:84px;border-top:3px solid #fff;border-left:3px solid #fff;border-right:3px solid #808080;border-bottom:3px solid #808080;background:#c0c0c0"></div>
<svg style="left:605px;top:305px" width="90" height="90" viewBox="0 0 90 90" shape-rendering="crispEdges"><rect x="37" y="8" width="14" height="3" fill="#fff"/><rect x="28" y="11" width="31" height="3" fill="#fff"/><rect x="25" y="14" width="37" height="3" fill="#fff"/><rect x="20" y="17" width="48" height="3" fill="#fff"/><rect x="20" y="20" width="48" height="2" fill="#fff"/><rect x="17" y="22" width="53" height="3" fill="#fff"/><rect x="14" y="25" width="59" height="3" fill="#fff"/><rect x="14" y="28" width="59" height="3" fill="#fff"/><rect x="14" y="31" width="59" height="3" fill="#fff"/><rect x="11" y="34" width="65" height="3" fill="#fff"/><rect x="11" y="37" width="65" height="2" fill="#fff"/><rect x="11" y="39" width="65" height="3" fill="#fff"/><rect x="11" y="42" width="65" height="3" fill="#fff"/><rect x="11" y="45" width="65" height="3" fill="#fff"/><rect x="14" y="48" width="59" height="3" fill="#fff"/><rect x="14" y="51" width="59" height="2" fill="#fff"/><rect x="14" y="53" width="59" height="3" fill="#fff"/><rect x="17" y="56" width="53" height="3" fill="#fff"/><rect x="20" y="59" width="48" height="3" fill="#fff"/><rect x="20" y="62" width="48" height="3" fill="#fff"/><rect x="25" y="65" width="37" height="3" fill="#fff"/><rect x="28" y="68" width="31" height="2" fill="#fff"/><rect x="37" y="70" width="14" height="3" fill="#fff"/><path d="M11 34h3v3h-3zM11 37h3v2h-3zM11 39h3v3h-3zM11 42h3v3h-3zM11 45h3v3h-3zM14 25h3v3h-3zM14 28h3v3h-3zM14 31h3v3h-3zM14 48h3v3h-3zM14 51h3v2h-3zM14 53h3v3h-3zM17 22h3v3h-3zM17 39h3v3h-3zM17 56h3v3h-3zM20 17h2v3h-2zM20 20h2v2h-2zM20 28h2v3h-2zM20 51h2v2h-2zM20 59h2v3h-2zM20 62h2v3h-2zM22 17h3v3h-3zM22 62h3v3h-3zM25 14h3v3h-3zM25 65h3v3h-3zM28 11h3v3h-3zM28 25h3v3h-3zM28 59h3v3h-3zM28 68h3v2h-3zM31 11h3v3h-3zM31 28h3v3h-3zM31 68h3v2h-3zM34 11h3v3h-3zM34 31h3v3h-3zM34 68h3v2h-3zM37 8h2v3h-2zM37 34h2v3h-2zM37 70h2v3h-2zM39 8h3v3h-3zM39 37h3v2h-3zM39 70h3v3h-3zM42 8h3v3h-3zM42 14h3v3h-3zM42 39h3v3h-3zM42 65h3v3h-3zM42 70h3v3h-3zM45 8h3v3h-3zM45 37h3v2h-3zM45 70h3v3h-3zM48 8h3v3h-3zM48 34h3v3h-3zM48 70h3v3h-3zM51 11h2v3h-2zM51 31h2v3h-2zM51 68h2v2h-2zM53 11h3v3h-3zM53 28h3v3h-3zM53 68h3v2h-3zM56 11h3v3h-3zM56 25h3v3h-3zM56 59h3v3h-3zM56 68h3v2h-3zM59 14h3v3h-3zM59 22h3v3h-3zM59 65h3v3h-3zM62 17h3v3h-3zM62 62h3v3h-3zM65 17h3v3h-3zM65 20h3v2h-3zM65 28h3v3h-3zM65 51h3v2h-3zM65 59h3v3h-3zM65 62h3v3h-3zM68 22h2v3h-2zM68 39h2v3h-2zM68 56h2v3h-2zM70 25h3v3h-3zM70 28h3v3h-3zM70 31h3v3h-3zM70 48h3v3h-3zM70 51h3v2h-3zM70 53h3v3h-3zM73 34h3v3h-3zM73 37h3v2h-3zM73 39h3v3h-3zM73 42h3v3h-3zM73 45h3v3h-3z" fill="#000"/></svg>
<div class="a" style="left:602.0px;top:299.0px;width:7px;height:7px;background:#000;border:1px solid #fff"></div>
<div class="a" style="left:602.0px;top:344.0px;width:7px;height:7px;background:#000;border:1px solid #fff"></div>
<div class="a" style="left:602.0px;top:389.0px;width:7px;height:7px;background:#000;border:1px solid #fff"></div>
<div class="a" style="left:647.0px;top:299.0px;width:7px;height:7px;background:#000;border:1px solid #fff"></div>
<div class="a" style="left:647.0px;top:389.0px;width:7px;height:7px;background:#000;border:1px solid #fff"></div>
<div class="a" style="left:692.0px;top:299.0px;width:7px;height:7px;background:#000;border:1px solid #fff"></div>
<div class="a" style="left:692.0px;top:344.0px;width:7px;height:7px;background:#000;border:1px solid #fff"></div>
<div class="a" style="left:692.0px;top:389.0px;width:7px;height:7px;background:#000;border:1px solid #fff"></div>
<!-- ============ SOURCE WINDOW ============ -->
<div class="a" style="left:309px;top:430px;width:653px;height:347px;border:1px solid #404448;border-radius:7px 7px 0 0;background:#d6e4f2"></div>
<div class="a" style="left:310px;top:431px;width:651px;height:29px;border-radius:6px 6px 0 0;background:linear-gradient(#bccbdb,#c6d4e4 50%,#d3e0ee);border:1px solid #eef3f9;border-bottom:0"></div>
<div class="a" style="left:310px;top:460px;width:1px;height:316px;background:#eef4fa"></div>
<div class="a" style="left:960px;top:460px;width:1px;height:316px;background:#eef4fa"></div>
<svg style="left:320px;top:440px" width="14" height="17" viewBox="0 0 14 17"><path d="M0.5 0.5H10L13 3.5V15.5H0.5Z" fill="#fff" stroke="#444"/><path d="M3 4.5H10" stroke="#2a2" stroke-width="1.2"/><path d="M2 7.5H11M2 9.5H11" stroke="#555" stroke-width=".8"/></svg>
<div class="a" style="left:339px;top:442px;font-size:12px;color:#3c4656;white-space:nowrap">Source - Panel1</div>
<div class="a" style="left:855px;top:440px;width:31px;height:17px;border:1px solid #7f8fae;border-radius:3px;background:linear-gradient(#d6e1ee,#c4d2e3);box-shadow:inset 0 0 0 1px rgba(255,255,255,.45)"></div>
<div class="a" style="left:888px;top:440px;width:31px;height:17px;border:1px solid #7f8fae;border-radius:3px;background:linear-gradient(#d6e1ee,#c4d2e3);box-shadow:inset 0 0 0 1px rgba(255,255,255,.45)"></div>
<div class="a" style="left:921px;top:440px;width:31px;height:17px;border:1px solid #7f8fae;border-radius:3px;background:linear-gradient(#d6e1ee,#c4d2e3);box-shadow:inset 0 0 0 1px rgba(255,255,255,.45)"></div>
<div class="a" style="left:865px;top:448px;width:11px;height:5px;border:1px solid #3a3f4a;border-radius:1px;background:linear-gradient(#fff,#dcdcdc)"></div>
<div class="a" style="left:898px;top:444px;width:11px;height:9px;border:1px solid #3a3f4a;border-radius:1px;background:linear-gradient(#fff,#dcdcdc)"></div>
<div class="a" style="left:901px;top:447px;width:5px;height:3px;border:1px solid #3a3f4a;background:#b8c8dc"></div>
<svg style="left:930px;top:443px" width="13" height="11" viewBox="0 0 13 11"><path d="M1 1H4.3L6.5 3.6L8.7 1H12L8.4 5.5L12 10H8.7L6.5 7.4L4.3 10H1L4.6 5.5Z" fill="#f6f6f6" stroke="#3a3f4a" stroke-width="1.1" stroke-linejoin="round"/></svg>
<div class="a" style="left:317px;top:460px;width:637px;height:309px;background:#f0f0f0"></div>
<div class="a" style="left:317px;top:460px;width:637px;height:1px;background:#a0a0a0"></div>
<div class="a" style="left:317px;top:768px;width:637px;height:1px;background:#fff"></div>
<div class="grip" style="left:320px;top:462px;height:25px"></div>
<svg style="left:329px;top:467px" width="17" height="16" viewBox="0 0 17 16"><rect x="1.2" y="3.7" width="13" height="11" rx="3" fill="#fff" stroke="#000" stroke-width="1.8"/><rect x="5" y="1.2" width="6" height="2.5" rx="1" fill="#fff" stroke="#000" stroke-width="1.2"/><rect x="3.2" y="5.7" width="9" height="7" fill="#e8e8e8" stroke="#999" stroke-width=".6"/><rect x="13" y="2.5" width="2.5" height="2.5" fill="#f00"/><rect x="13" y="5" width="1.5" height="1.5" fill="#0c0"/></svg>
<div class="sep" style="left:353px;top:463px;height:24px"></div>
<div class="a" style="left:357px;top:463px;width:200px;height:24px;border:1px solid #8c8c8c;border-radius:3px;background:linear-gradient(#f6f6f6,#ececec 45%,#dcdcdc 55%,#d4d4d4);box-shadow:inset 0 0 0 1px rgba(255,255,255,.7)"></div>
<div class="a" style="left:361px;top:467px;font-size:14.5px;letter-spacing:-.6px;font-weight:bold;color:#000;white-space:nowrap">Timer1</div>
<svg style="left:545px;top:473px" width="8" height="5" viewBox="0 0 8 5"><path d="M0.5 0.5H7.5L4 4.5Z" fill="#000"/></svg>
<div class="a" style="left:565px;top:463px;width:200px;height:24px;border:1px solid #8c8c8c;border-radius:3px;background:linear-gradient(#f6f6f6,#ececec 45%,#dcdcdc 55%,#d4d4d4);box-shadow:inset 0 0 0 1px rgba(255,255,255,.7)"></div>
<div class="a" style="left:569px;top:467px;font-size:14.5px;letter-spacing:-.6px;font-weight:bold;color:#000;white-space:nowrap">TIMER</div>
<svg style="left:753px;top:473px" width="8" height="5" viewBox="0 0 8 5"><path d="M0.5 0.5H7.5L4 4.5Z" fill="#000"/></svg>
<div class="sep" style="left:561px;top:463px;height:24px"></div>
<div class="sep" style="left:769px;top:463px;height:24px"></div>
<div class="sep" style="left:869px;top:463px;height:24px"></div>
<svg style="left:776px;top:467px" width="17" height="16" viewBox="0 0 17 16"><path d="M5 1.5H16M8 4.5H16M8 7.5H16M8 10.5H16M2 13.5H16M0 6H4" stroke="#a0a0a0" stroke-width="1"/><path d="M5 6L2.5 3.5V8.5Z" fill="#a0a0a0"/><path d="M4.5 2V15" stroke="#a0a0a0" stroke-dasharray="1 1"/></svg>
<svg style="left:799px;top:467px" width="17" height="16" viewBox="0 0 17 16"><path d="M5 1.5H16M8 4.5H16M8 7.5H16M8 10.5H16M2 13.5H16M1 6H5" stroke="#a0a0a0" stroke-width="1"/><path d="M0 6L3 3.5V8.5Z" fill="#a0a0a0"/><path d="M5.5 2V15" stroke="#a0a0a0" stroke-dasharray="1 1"/></svg>
<svg style="left:822px;top:467px" width="15" height="16" viewBox="0 0 15 16"><path d="M0 1.5H14M0 4.5H14M0 7.5H14M0 10.5H14M4 13.5H14" stroke="#a0a0a0" stroke-width="1.3"/></svg>
<svg style="left:845px;top:467px" width="15" height="16" viewBox="0 0 15 16"><path d="M4 4Q4 1 7 1Q10 1 10 4" stroke="#a0a0a0" fill="none" stroke-width="1.3"/><path d="M0 5.5H14M0 8.5H14M2 11.5H14M4 14.5H14" stroke="#a0a0a0" stroke-width="1.3"/></svg>
<svg style="left:877px;top:469px" width="16" height="13" viewBox="0 0 16 13"><path d="M0.5 12.5L10 1" stroke="#000" stroke-width="1"/><path d="M5.5 6.5L9.5 2L12 4.5L14.5 5.5L11 10L8.5 8Z" fill="#0010e0" stroke="#000" stroke-width="1"/></svg>
<svg style="left:900px;top:467px" width="16" height="16" viewBox="0 0 16 16"><path d="M2 4Q4 0 8 2L9 5" stroke="#a0a0a0" fill="none" stroke-width="1.3"/><path d="M1 15L8 6" stroke="#a0a0a0" stroke-width="1"/><path d="M8 9L11 5L15 10Q15 14 12 14Q9 14 8 11Z" fill="#a0a0a0"/></svg>
<svg style="left:923px;top:467px" width="16" height="16" viewBox="0 0 16 16"><path d="M2 4Q4 0 8 2L9 5" stroke="#a0a0a0" fill="none" stroke-width="1.3"/><path d="M1 15L8 6" stroke="#a0a0a0" stroke-width="1"/><path d="M8 9L11 5L15 10Q15 14 12 14Q9 14 8 11Z" fill="#a0a0a0"/></svg>
<div class="a" style="left:946px;top:467px;width:7px;height:16px;overflow:hidden"><svg style="left:0;top:0" width="16" height="16" viewBox="0 0 16 16"><path d="M1 1L7 7M7 1L1 7" stroke="#a0a0a0" stroke-width="1.5"/><path d="M1 15L8 6" stroke="#a0a0a0"/><path d="M8 9L11 5L15 10Q15 14 12 14Q9 14 8 11Z" fill="#a0a0a0"/></svg></div>
<div class="a" style="left:317px;top:489px;width:637px;height:1px;background:#a0a0a0"></div>
<div class="a" style="left:317px;top:490px;width:637px;height:1px;background:#6a6a6a"></div>
<div class="a" style="left:317px;top:489px;width:1px;height:279px;background:#a0a0a0"></div>
<div class="a" style="left:318px;top:490px;width:1px;height:278px;background:#6a6a6a"></div>
<div class="a" style="left:319px;top:491px;width:60px;height:260px;background:#efefef"></div>
<div class="a" style="left:379px;top:491px;width:557px;height:260px;background:#fff"></div>
<div class="a" style="left:936px;top:491px;width:17px;height:260px;background:linear-gradient(90deg,#e8e8e8,#f2f2f2 40%,#f2f2f2 60%,#e8e8e8)"></div>
<svg style="left:940px;top:497px" width="8" height="5" viewBox="0 0 8 5"><path d="M0 4.5L4 0.5L8 4.5Z" fill="#8a8a8a"/></svg>
<svg style="left:940px;top:739px" width="8" height="5" viewBox="0 0 8 5"><path d="M0 0.5L4 4.5L8 0.5Z" fill="#8a8a8a"/></svg>
<div class="a" style="left:319px;top:751px;width:617px;height:17px;background:linear-gradient(#e4e4e4,#f0f0f0 30%,#f0f0f0 70%,#e6e6e6)"></div>
<div class="a" style="left:936px;top:751px;width:17px;height:17px;background:#f0f0f0"></div>
<svg style="left:325px;top:755px" width="5" height="8" viewBox="0 0 5 8"><path d="M4.5 0L0.5 4L4.5 8Z" fill="#222"/></svg>
<svg style="left:925px;top:755px" width="5" height="8" viewBox="0 0 5 8"><path d="M0.5 0L4.5 4L0.5 8Z" fill="#222"/></svg>
<div class="a" style="left:337px;top:751px;width:18px;height:15px;border:1px solid #989898;border-radius:2px;background:linear-gradient(#fafafa,#ececec 50%,#d8d8d8)"></div>
<div class="a" style="left:342px;top:755px;width:8px;height:6px;border-left:1px solid #333;border-right:1px solid #333"></div>
<div class="a" style="left:345px;top:755px;width:2px;height:6px;border-left:1px solid #333"></div>
<svg style="left:944px;top:758px" width="8" height="8" viewBox="0 0 8 8"><path d="M6 1H7V2H6ZM4 3H5V4H4ZM6 3H7V4H6ZM2 5H3V6H2ZM4 5H5V6H4ZM6 5H7V6H6Z" fill="#b0b0b0"/></svg>
<div class="a ln" style="left:339px;top:491px">00001</div>
<div class="a code" style="left:379px;top:491px"><span class="r">#</span><span class="k">include</span> <span class="r">&lt;</span>PanelMain.h<span class="r">&gt;</span> raw</div>
<div class="a ln" style="left:339px;top:506px">00002</div>
<div class="a ln" style="left:339px;top:521px">00003</div>
<div class="a code" style="left:379px;top:521px"><span class="k">Sub</span> IPB1_CLICKED()</div>
<div class="a ln" style="left:339px;top:536px">00004</div>
<div class="a code" style="left:379px;top:536px">    <span class="k">run</span> pro1</div>
<div class="a ln" style="left:339px;top:551px">00005</div>
<div class="a code" style="left:379px;top:551px"><span class="k">End</span> <span class="k">Sub</span></div>
<div class="a ln" style="left:339px;top:566px">00006</div>
<div class="a ln" style="left:339px;top:581px">00007</div>
<div class="a code" style="left:379px;top:581px"><span class="k">Sub</span> Timer1_TIMER()</div>
<div class="a ln" style="left:339px;top:596px">00008</div>
<div class="a code" style="left:379px;top:596px">    IPB1.State <span class="r">=</span> <span class="k">IO</span>[<span class="t">24</span>]</div>
<div class="a ln" style="left:339px;top:611px">00009</div>
<div class="a code" style="left:379px;top:611px"><span class="k">End</span> <span class="k">Sub</span></div>
<div class="a ln" style="left:339px;top:626px">00010</div>
</body></html>
